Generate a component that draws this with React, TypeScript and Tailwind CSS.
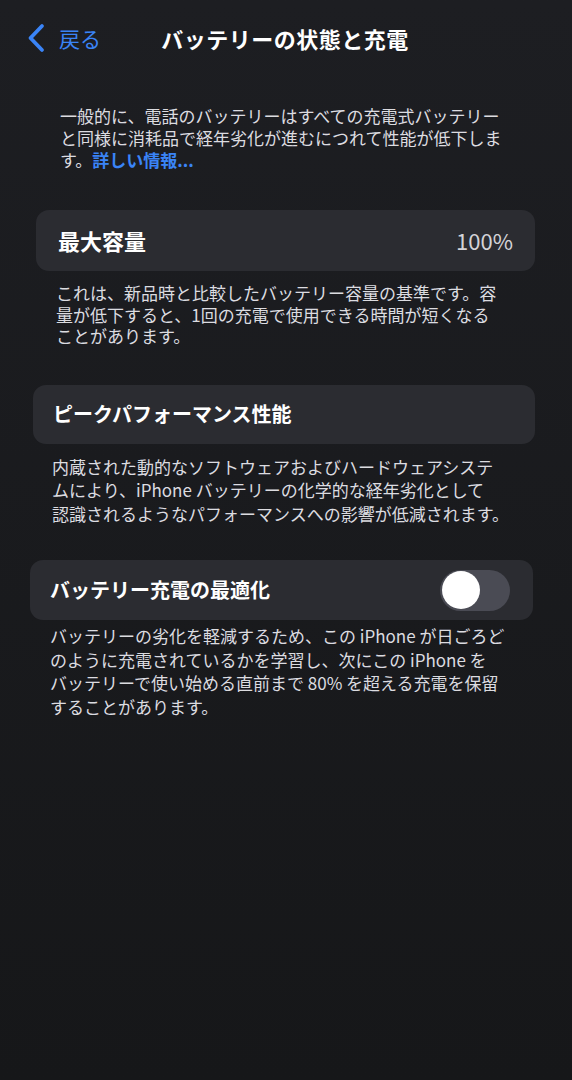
import { useState } from 'react';

const font = { fontFamily: '"Noto Sans CJK JP", "Noto Sans", sans-serif' };

function Toggle({ on, onChange }: { on: boolean; onChange: () => void }) {
  return (
    <button
      onClick={onChange}
      className={`flex h-[41px] w-[70px] items-center rounded-full p-[1.5px] ${
        on ? 'justify-end bg-[#34c759]' : 'justify-start bg-[#4a4b54]'
      }`}
    >
      <span className="block h-[38px] w-[38px] rounded-full bg-white" />
    </button>
  );
}

export default function App() {
  const [optimized, setOptimized] = useState(false);

  return (
    <div
      className="h-[1080px] w-full overflow-hidden bg-gradient-to-b from-[#1d1e22] to-[#161719] text-[#dcdce0]"
      style={font}
    >
      {/* header */}
      <header className="grid h-[76px] grid-cols-[1fr_auto_1fr] items-center pl-[26px] pr-[28px]">
        <button className="flex items-center gap-[13px] text-[#3a84f7]">
          <svg width="20" height="30" viewBox="0 0 20 30" fill="none">
            <path d="M16 3L4.5 15L16 27" stroke="currentColor" strokeWidth="3.8" strokeLinecap="round" strokeLinejoin="round" />
          </svg>
          <span className="text-[21px] leading-none">戻る</span>
        </button>
        <h1 className="text-[22px] font-bold tracking-[0.5px] text-white">バッテリーの状態と充電</h1>
        <div />
      </header>

      <p className="ml-[60px] mr-[40px] mt-[29px] text-[17px] leading-[22px]">
        一般的に、電話のバッテリーはすべての充電式バッテリー
        <br />
        と同様に消耗品で経年劣化が進むにつれて性能が低下しま
        <br />
        す。<span className="font-semibold text-[#3a84f7]">詳しい情報...</span>
      </p>

      {/* max capacity */}
      <div className="ml-[36px] mr-[37px] mt-[39px] flex h-[61px] items-center justify-between rounded-[13px] bg-[#2b2c31] pl-[22px] pr-[22px]">
        <span className="text-[22px] font-semibold text-white">最大容量</span>
        <span className="text-[22px] text-[#d4d4d8]">100%</span>
      </div>
      <p className="ml-[56px] mr-[40px] mt-[11px] text-[17px] leading-[21.5px]">
        これは、新品時と比較したバッテリー容量の基準です。容
        <br />
        量が低下すると、1回の充電で使用できる時間が短くなる
        <br />
        ことがあります。
      </p>

      {/* peak performance */}
      <div className="ml-[33px] mr-[37px] mt-[38px] flex h-[59px] items-center rounded-[13px] bg-[#2b2c31] pl-[20px]">
        <span className="text-[20px] font-semibold text-white">ピークパフォーマンス性能</span>
      </div>
      <p className="ml-[52px] mr-[40px] mt-[11px] text-[17px] leading-[23.5px]">
        内蔵された動的なソフトウェアおよびハードウェアシステ
        <br />
        ムにより、iPhone バッテリーの化学的な経年劣化として
        <br />
        認識されるようなパフォーマンスへの影響が低減されます。
      </p>

      {/* optimized charging */}
      <div className="ml-[30px] mr-[39px] mt-[35px] flex h-[60px] items-center justify-between rounded-[13px] bg-[#2b2c31] pl-[20px] pr-[23px]">
        <span className="text-[20px] font-semibold text-white">バッテリー充電の最適化</span>
        <Toggle on={optimized} onChange={() => setOptimized(!optimized)} />
      </div>
      <p className="ml-[50px] mr-[40px] mt-[4px] text-[17px] leading-[23.7px]">
        バッテリーの劣化を軽減するため、この iPhone が日ごろど
        <br />
        のように充電されているかを学習し、次にこの iPhone を
        <br />
        バッテリーで使い始める直前まで 80% を超える充電を保留
        <br />
        することがあります。
      </p>
    </div>
  );
}
